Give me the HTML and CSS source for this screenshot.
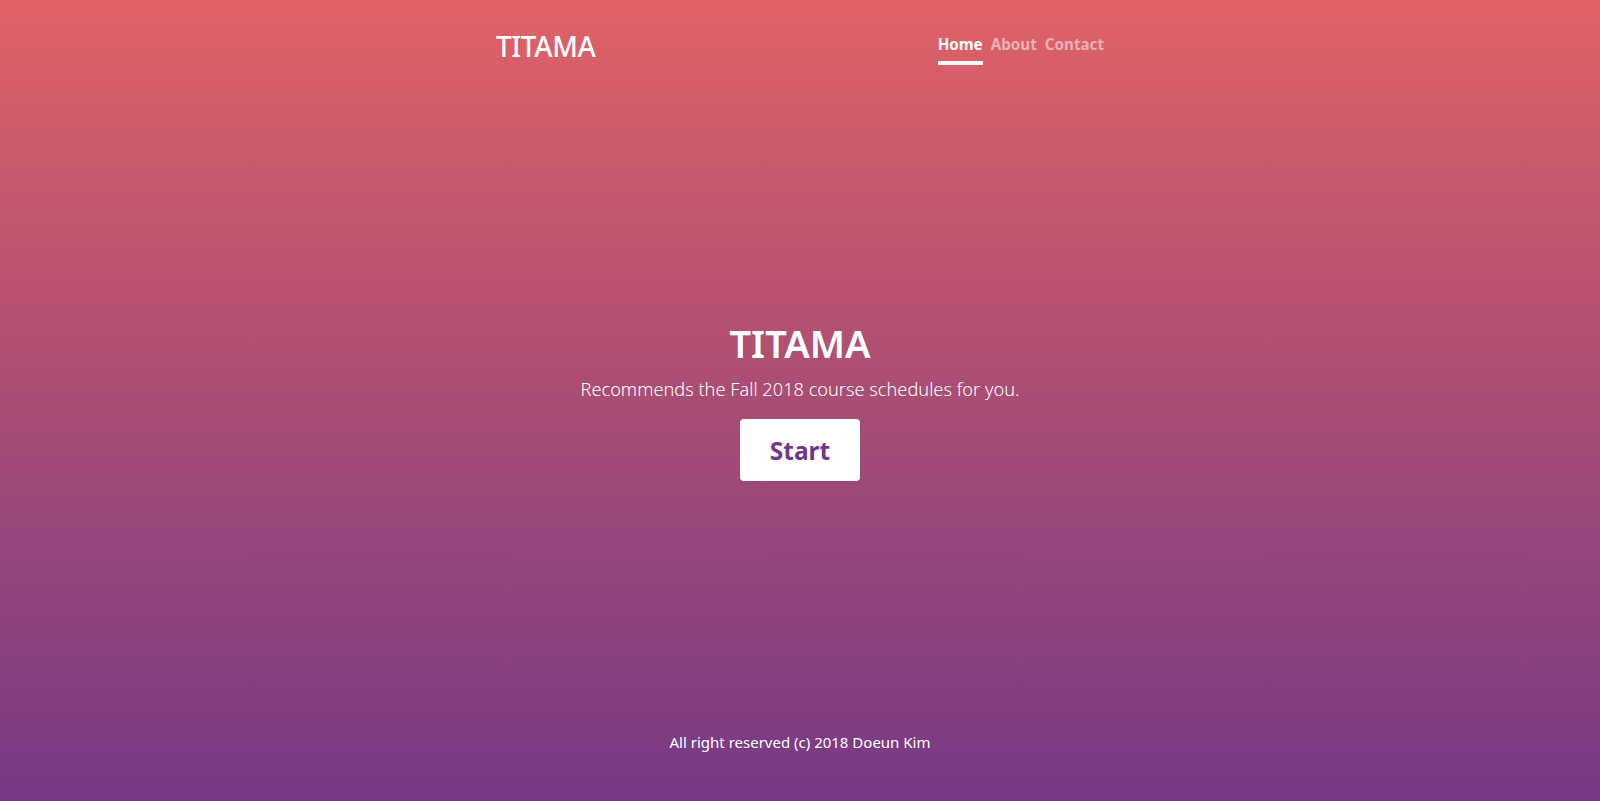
FILE: index.html
```html
<!DOCTYPE html>
<html lang="en">
<head>
<meta charset="utf-8">
<title>TITAMA</title>
<link rel="stylesheet" href="styles.css">
</head>
<body>
<div class="page">
  <header class="header">
    <div class="logo">TITAMA</div>
    <nav class="nav">
      <a class="nav-link active" href="#">Home</a>
      <a class="nav-link" href="#">About</a>
      <a class="nav-link" href="#">Contact</a>
    </nav>
  </header>
  <main class="hero">
    <h1 class="hero-title">TITAMA</h1>
    <p class="hero-sub">Recommends the Fall 2018 course schedules for you.</p>
    <a class="start-btn" href="#">Start</a>
  </main>
  <footer class="footer">All right reserved (c) 2018 Doeun Kim</footer>
</div>
</body>
</html>
```
FILE: styles.css
```css
html, body {
  margin: 0;
  padding: 0;
  height: 100%;
}
body {
  font-family: "Noto Sans", "Open Sans", sans-serif;
  color: #fff;
  background: linear-gradient(to bottom, #e06266 0%, #a94d74 50%, #763985 100%);
}
.page {
  min-height: 100vh;
  display: flex;
  flex-direction: column;
}
.header {
  width: 608px;
  margin: 0 auto;
  padding-top: 26px;
  display: flex;
  justify-content: space-between;
  align-items: flex-start;
}
.logo {
  font-size: 28px;
  font-weight: 500;
  line-height: 40px;
  letter-spacing: -0.4px;
}
.nav {
  display: flex;
  gap: 8px;
  padding-top: 7px;
}
.nav-link {
  color: rgba(255, 255, 255, 0.5);
  font-weight: 700;
  font-size: 15.2px;
  text-decoration: none;
  line-height: 22px;
  padding-bottom: 6px;
  border-bottom: 4px solid transparent;
}
.nav-link.active {
  color: #fff;
  border-bottom-color: #fff;
}
.hero {
  flex: 1;
  display: flex;
  flex-direction: column;
  align-items: center;
  justify-content: center;
  padding-top: 4px;
}
.hero-title {
  margin: 0 0 7px;
  font-size: 38px;
  font-weight: 600;
  line-height: 48px;
}
.hero-sub {
  margin: 0 0 15px;
  font-size: 18.2px;
  font-weight: 300;
  line-height: 30px;
}
.start-btn {
  display: flex;
  align-items: center;
  justify-content: center;
  width: 120px;
  height: 62px;
  background: #fff;
  border-radius: 4px;
  color: #6f3889;
  font-size: 24.5px;
  font-weight: 700;
  text-decoration: none;
}
.footer {
  text-align: center;
  font-size: 15px;
  padding-bottom: 47px;
  line-height: 24px;
}
```
